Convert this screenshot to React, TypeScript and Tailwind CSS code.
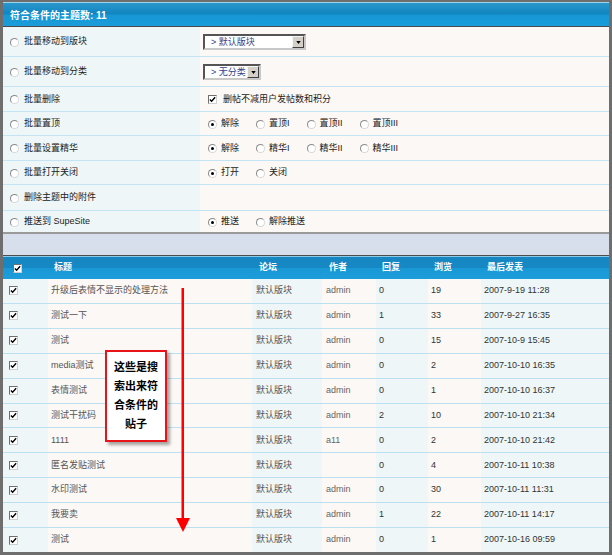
import React from "react";

const FONT = "font-['Liberation_Sans','Noto_Sans_CJK_SC',sans-serif]";
const COLS = "grid grid-cols-[45px_204px_70px_54px_52px_53px_128px]";

function Radio({ checked = false }: { checked?: boolean }) {
	return (
		<span className="relative inline-flex h-[9px] w-[9px] shrink-0 items-center justify-center rounded-full border border-[#8a8a8a] border-b-[#d8d8d8] border-r-[#d8d8d8] bg-white">
			{checked && <span className="h-[3px] w-[3px] rounded-full bg-black" />}
		</span>
	);
}

function Checkbox() {
	return (
		<span className="inline-flex h-[9px] w-[9px] shrink-0 items-center justify-center border border-[#6f6f6f] border-b-[#cfcfcf] border-r-[#cfcfcf] bg-white">
			<svg viewBox="0 0 8 8" className="h-[7px] w-[7px]">
				<path d="M1 4 L3 6 L7 1.5" fill="none" stroke="#000" strokeWidth="1.6" />
			</svg>
		</span>
	);
}

function Select({ label, width }: { label: string; width: string }) {
	return (
		<span className={`-ml-[5px] inline-flex h-[16px] items-center border-2 border-[#555] border-b-[#c8c8c8] border-r-[#c8c8c8] bg-white ${width}`}>
			<span className="flex-1 pl-[6px] text-[9px] leading-none text-[#33418a]">&gt; {label}</span>
			<span className="flex h-[12px] w-[12px] items-center justify-center border border-[#f4f4f4] border-b-[#404040] border-r-[#404040] bg-[#d4d0c8]">
				<svg viewBox="0 0 6 4" className="h-[3px] w-[5px]">
					<path d="M0 0 H6 L3 4 Z" fill="#000" />
				</svg>
			</span>
		</span>
	);
}

function Opt({ checked, label }: { checked?: boolean; label: string }) {
	return (
		<span className="flex items-center gap-[4px]">
			<Radio checked={checked} />
			<span>{label}</span>
		</span>
	);
}

const formRows: { label: string; h: string; right: React.ReactNode }[] = [
	{ label: "批量移动到版块", h: "h-[30px]", right: <Select label="默认版块" width="w-[103px]" /> },
	{ label: "批量移动到分类", h: "h-[30px]", right: <Select label="无分类" width="w-[58px]" /> },
	{
		label: "批量删除",
		h: "h-[25px]",
		right: (
			<span className="flex items-center gap-[6px]">
				<Checkbox />
				<span>删帖不减用户发帖数和积分</span>
			</span>
		),
	},
	{
		label: "批量置顶",
		h: "h-[24px]",
		right: (
			<span className="flex items-center gap-[17px]">
				<Opt checked label="解除" />
				<Opt label="置顶I" />
				<Opt label="置顶II" />
				<Opt label="置顶III" />
			</span>
		),
	},
	{
		label: "批量设置精华",
		h: "h-[25px]",
		right: (
			<span className="flex items-center gap-[17px]">
				<Opt checked label="解除" />
				<Opt label="精华I" />
				<Opt label="精华II" />
				<Opt label="精华III" />
			</span>
		),
	},
	{
		label: "批量打开关闭",
		h: "h-[24px]",
		right: (
			<span className="flex items-center gap-[17px]">
				<Opt checked label="打开" />
				<Opt label="关闭" />
			</span>
		),
	},
	{ label: "删除主题中的附件", h: "h-[26px]", right: null },
	{
		label: "推送到 SupeSite",
		h: "h-[23px]",
		right: (
			<span className="flex items-center gap-[17px]">
				<Opt checked label="推送" />
				<Opt label="解除推送" />
			</span>
		),
	},
];

const threads = [
	["升级后表情不显示的处理方法", "默认版块", "admin", "0", "19", "2007-9-19 11:28"],
	["测试一下", "默认版块", "admin", "1", "33", "2007-9-27 16:35"],
	["测试", "默认版块", "admin", "0", "15", "2007-10-9 15:45"],
	["media测试", "默认版块", "admin", "0", "2", "2007-10-10 16:35"],
	["表情测试", "默认版块", "admin", "0", "1", "2007-10-10 16:37"],
	["测试干扰码", "默认版块", "admin", "2", "10", "2007-10-10 21:34"],
	["1111", "默认版块", "a11", "0", "2", "2007-10-10 21:42"],
	["匿名发贴测试", "默认版块", "", "0", "4", "2007-10-11 10:38"],
	["水印测试", "默认版块", "admin", "0", "30", "2007-10-11 11:31"],
	["我要卖", "默认版块", "admin", "1", "22", "2007-10-11 14:17"],
	["测试", "默认版块", "admin", "0", "1", "2007-10-16 09:59"],
];

const BLUE = "bg-[#eef6f7]";
const PINK = "bg-[#fcf8f5]";

export default function App() {
	return (
		<div className={`relative flex h-[555px] w-[612px] flex-col overflow-hidden border-x-[3px] border-t-2 border-b-[3px] border-[#6e6e6e] bg-white text-[9px] text-[#333] ${FONT}`}>
			{/* 主题数标题 */}
			<div className="flex h-[25px] items-center border-t border-b border-t-[#9fd3ee] border-b-[#4a4a4a] bg-[linear-gradient(#2a97cc,#1285c0_45%,#1797d5_55%,#1a9dda)] pl-[7px] pt-[2px] text-[10px] font-bold text-white">
				符合条件的主题数: 11
			</div>

			{/* 批量操作 */}
			<div className="flex flex-col">
				{formRows.map((r, i) => (
					<div
						key={i}
						className={`flex ${r.h} ${i === formRows.length - 1 ? "border-b-2 border-[#9a9a9a]" : "border-b border-[#c4e4f3]"}`}
					>
						<div className={`flex w-[197px] items-center gap-[5px] pl-[7px] pt-[1px] text-[#222] ${BLUE}`}>
							<Radio />
							<span>{r.label}</span>
						</div>
						<div className={`flex flex-1 items-center pl-[8px] pt-[1px] text-[#222] ${PINK}`}>{r.right}</div>
					</div>
				))}
			</div>

			<div className="h-[22px] border-b border-[#4d4d4d] bg-[#d6dfeb]" />

			{/* 主题列表 */}
			<div className={`${COLS} h-[23px] items-center border-t border-[#8dcaea] bg-[linear-gradient(#1787c2,#1688c4_50%,#1a98d6_52%,#1d9ddb)] text-[9px] font-bold text-white`}>
				<span className="flex pl-[10px]">
					<Checkbox />
				</span>
				<span className="pl-[6px]">标题</span>
				<span className="pl-[7px]">论坛</span>
				<span className="pl-[7px]">作者</span>
				<span className="pl-[6px]">回复</span>
				<span className="pl-[6px]">浏览</span>
				<span className="pl-[6px]">最后发表</span>
			</div>
			<div className="flex flex-1 flex-col">
				{threads.map((t, i) => (
					<div key={i} className={`${COLS} flex-1 border-b border-[#bde0f1] last:border-b-0`}>
						<span className={`flex items-center pl-[6px] ${BLUE}`}>
							<Checkbox />
						</span>
						<span className={`flex items-center pl-[3px] text-[#555] ${PINK}`}>{t[0]}</span>
						<span className={`flex items-center pl-[4px] text-[#555] ${BLUE}`}>{t[1]}</span>
						<span className={`flex items-center pl-[4px] text-[#666] ${PINK}`}>{t[2]}</span>
						<span className={`flex items-center pl-[3px] text-[#333] ${BLUE}`}>{t[3]}</span>
						<span className={`flex items-center pl-[3px] text-[#333] ${PINK}`}>{t[4]}</span>
						<span className={`flex items-center pl-[3px] text-[#333] ${BLUE}`}>{t[5]}</span>
					</div>
				))}
			</div>

			{/* 红色箭头标注 */}
			<svg className="pointer-events-none absolute left-[170px] top-[286px]" width="20" height="244" viewBox="0 0 20 244">
				<rect x="8.5" y="0" width="2.5" height="234" fill="#f00" />
				<path d="M3 230 H17 L10 244 Z" fill="#f00" />
			</svg>
			<div className="absolute left-[102px] top-[348px] flex h-[92px] w-[62px] flex-col items-center justify-center gap-[6px] border-2 border-[#e8141a] bg-white text-[11px] font-bold leading-[13px] text-black shadow-[3px_3px_3px_rgba(0,0,0,0.35)]">
				<span>这些是搜</span>
				<span>索出来符</span>
				<span>合条件的</span>
				<span>贴子</span>
			</div>
		</div>
	);
}
